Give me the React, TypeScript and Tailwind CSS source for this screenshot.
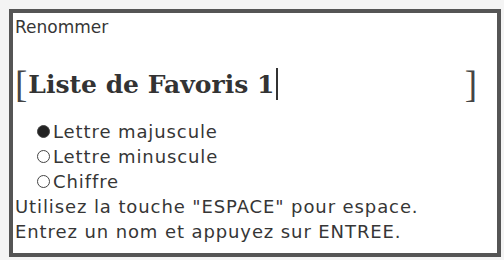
import React from 'react';

const options = [
  { label: 'Lettre majuscule', checked: true },
  { label: 'Lettre minuscule', checked: false },
  { label: 'Chiffre', checked: false },
];

const Radio: React.FC<{ checked: boolean }> = ({ checked }) => (
  <span
    className={`inline-block w-[13px] h-[13px] rounded-full border-[1.5px] border-[#444] mr-[3px] ${
      checked ? 'bg-[#222]' : 'bg-white'
    }`}
  />
);

const App: React.FC = () => {
  return (
    <div className="w-[504px] h-[260px] bg-[#f4f4f4] pt-[9px] pl-[9px]">
      <div
        className="w-[492px] h-[248px] bg-white border-[4px] border-[#555] text-[#363636] flex flex-col pl-[2px]"
        style={{ fontFamily: '"DejaVu Sans", Verdana, sans-serif' }}
      >
        <div className="text-[17px] leading-[20px] pt-[4px]">Renommer</div>

        {/* Name field */}
        <div
          className="flex items-center mt-[27px] h-[40px] pr-[20px]"
          style={{ fontFamily: '"DejaVu Serif", "Liberation Serif", serif' }}
        >
          <span
            className="text-[37px] leading-none text-[#444]"
            style={{ fontFamily: '"Liberation Serif", serif' }}
          >
            [
          </span>
          <span className="text-[25px] font-bold leading-none ml-[1px] text-[#333]">
            Liste de Favoris 1
          </span>
          <span className="w-[2px] h-[32px] bg-[#333] ml-[2px]" />
          <span className="flex-1" />
          <span
            className="text-[37px] leading-none text-[#444]"
            style={{ fontFamily: '"Liberation Serif", serif' }}
          >
            ]
          </span>
        </div>

        <div className="mt-[15px] pl-[22px] flex flex-col">
          {options.map((o) => (
            <div key={o.label} className="flex items-center text-[18px] leading-[25px] tracking-[0.9px]">
              <Radio checked={o.checked} />
              <span>{o.label}</span>
            </div>
          ))}
        </div>

        <div className="text-[18px] leading-[25px] tracking-[0.9px]">
          Utilisez la touche "ESPACE" pour espace.
        </div>
        <div className="text-[18px] leading-[25px] tracking-[0.9px]">
          Entrez un nom et appuyez sur ENTREE.
        </div>
      </div>
    </div>
  );
};

export default App;
